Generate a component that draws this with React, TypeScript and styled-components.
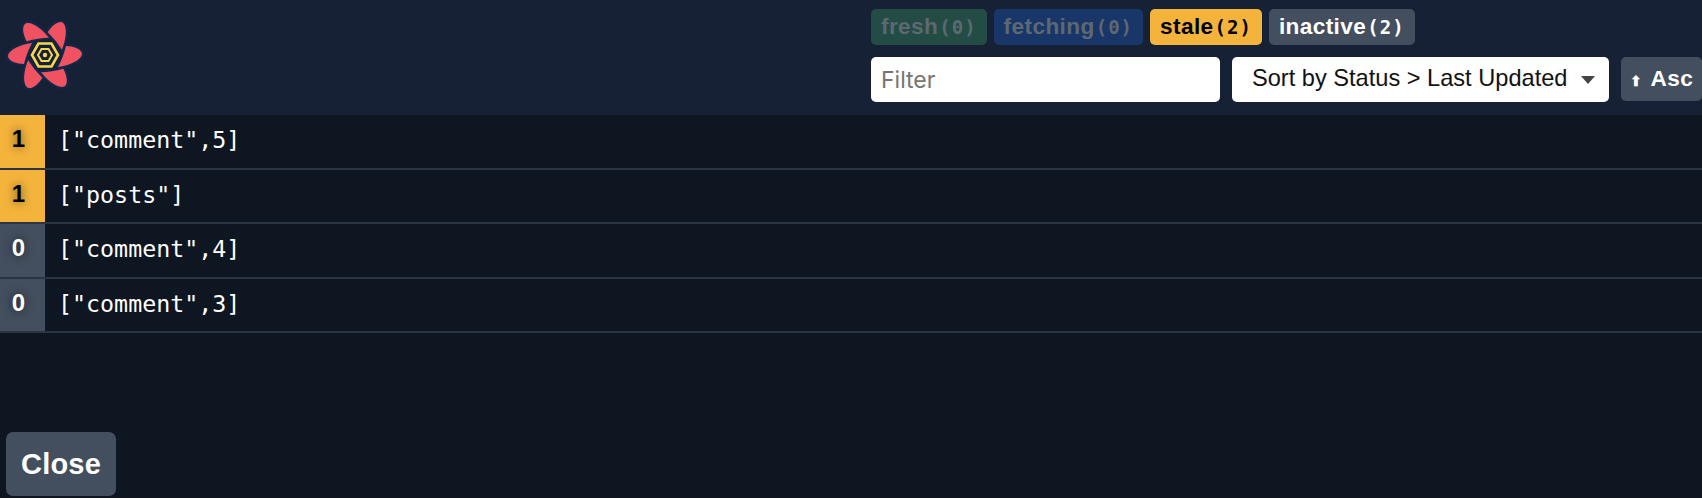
import React from "react";
import styled, { createGlobalStyle } from "styled-components";

type Status = "fresh" | "fetching" | "stale" | "inactive";

const statusColors: Record<Status, string> = {
  fresh: "#234d44",
  fetching: "#193669",
  stale: "#f4b43c",
  inactive: "#434e5e",
};

const badges: { status: Status; count: number }[] = [
  { status: "fresh", count: 0 },
  { status: "fetching", count: 0 },
  { status: "stale", count: 2 },
  { status: "inactive", count: 2 },
];

const queries: { observers: number; status: Status; hash: string }[] = [
  { observers: 1, status: "stale", hash: '["comment",5]' },
  { observers: 1, status: "stale", hash: '["posts"]' },
  { observers: 0, status: "inactive", hash: '["comment",4]' },
  { observers: 0, status: "inactive", hash: '["comment",3]' },
];

const Logo = () => (
  <svg width="90" height="90" viewBox="-45 -45 90 90">
    {[0, 60, 120, 180, 240, 300].map((angle) => (
      <path
        key={angle}
        transform={`rotate(${angle})`}
        d="M-13,-12 C-22,-11 -36,-6 -37,1 C-37,6 -28,9 -21,9 Q-18,-3 -13,-12 Z"
        fill="#f05261"
        stroke="#10294a"
        strokeWidth="4"
        paintOrder="stroke"
        strokeLinejoin="round"
      />
    ))}
    <g fill="#14213a" stroke="#f9d54a">
      <polygon points="-13,0 -6.5,-11.5 6.5,-11.5 13,0 6.5,11.5 -6.5,11.5" strokeWidth="2.6" />
      <polygon points="-7,0 -3.5,-6 3.5,-6 7,0 3.5,6 -3.5,6" strokeWidth="2" />
    </g>
    <circle r="2.2" fill="#f9d54a" />
  </svg>
);

const App: React.FC = () => {
  return (
    <>
      <GlobalStyle />
      <Panel>
        <Header>
          <LogoBox>
            <Logo />
          </LogoBox>
          <Controls>
            <BadgeRow>
              {badges.map((b) => (
                <Badge key={b.status} $status={b.status}>
                  {b.status}
                  <Count>({b.count})</Count>
                </Badge>
              ))}
            </BadgeRow>
            <FilterRow>
              <FilterInput type="text" placeholder="Filter" />
              <SortSelect>
                Sort by Status &gt; Last Updated
                <Caret />
              </SortSelect>
              <AscButton>
                <small>⬆</small> Asc
              </AscButton>
            </FilterRow>
          </Controls>
        </Header>
        <List>
          {queries.map((q, i) => (
            <Row key={i}>
              <Observers $status={q.status}>{q.observers}</Observers>
              <Hash>{q.hash}</Hash>
            </Row>
          ))}
        </List>
        <CloseButton>Close</CloseButton>
      </Panel>
    </>
  );
};

export default App;

const GlobalStyle = createGlobalStyle`
  html, body {
    margin: 0;
    padding: 0;
    background: #0d1621;
  }
`;

const Panel = styled.div`
  width: 1702px;
  height: 498px;
  position: relative;
  overflow: hidden;
  background: #0d1621;
  color: #fff;
  font-family: "Liberation Sans", Arial, sans-serif;
`;

const Header = styled.header`
  height: 115px;
  box-sizing: border-box;
  display: flex;
  justify-content: space-between;
  padding: 9px 0 0 0;
  background: #172136;
`;

const LogoBox = styled.div`
  width: 90px;
  height: 90px;
  margin-top: 1px;
`;

const Controls = styled.div`
  width: 831px;
  display: flex;
  flex-direction: column;
  gap: 12px;
`;

const BadgeRow = styled.div`
  display: flex;
  gap: 7px;
`;

const Badge = styled.span<{ $status: Status }>`
  height: 36px;
  box-sizing: border-box;
  display: flex;
  align-items: center;
  padding: 0 10px;
  border-radius: 5px;
  font-size: 22.6px;
  font-weight: 700;
  letter-spacing: 0.4px;
  background: ${(p) => statusColors[p.$status]};
  color: ${(p) =>
    p.$status === "stale"
      ? "#000"
      : p.$status === "inactive"
        ? "#fff"
        : "#5c6872"};
`;

const Count = styled.code`
  font-family: "DejaVu Sans Mono", monospace;
  font-size: 19px;
  font-weight: 700;
  letter-spacing: 1px;
  margin-left: 1px;
`;

const FilterRow = styled.div`
  display: flex;
  align-items: flex-start;
`;

const FilterInput = styled.input`
  width: 349px;
  height: 45px;
  box-sizing: border-box;
  border: 0;
  border-radius: 5px;
  padding: 0 10px;
  margin-right: 12px;
  font-family: "Inter", sans-serif;
  font-size: 23px;
  background: #fff;
  &::placeholder {
    color: #757575;
    opacity: 1;
  }
`;

const SortSelect = styled.div`
  width: 377px;
  height: 45px;
  box-sizing: border-box;
  display: flex;
  align-items: center;
  justify-content: space-between;
  padding: 0 14px 2px 20px;
  margin-right: 12px;
  border-radius: 5px;
  background: #fff;
  color: #111;
  font-size: 23.6px;
`;

const Caret = styled.span`
  width: 0;
  height: 0;
  margin-top: 3px;
  border-left: 7px solid transparent;
  border-right: 7px solid transparent;
  border-top: 8px solid #444;
`;

const AscButton = styled.button`
  width: 81px;
  height: 44px;
  flex-shrink: 0;
  border: 0;
  border-radius: 5px;
  padding: 0 0 0 9px;
  text-align: left;
  background: #434e5e;
  color: #fff;
  font-family: "Liberation Sans", sans-serif;
  font-weight: 700;
  font-size: 22.6px;
  letter-spacing: 0.5px;
  word-spacing: 2px;
  white-space: nowrap;
  small {
    font-size: 14px;
  }
`;

const List = styled.div`
  display: flex;
  flex-direction: column;
`;

const Row = styled.div`
  height: 54.6px;
  box-sizing: border-box;
  display: flex;
  border-bottom: 2px solid #2a3444;
`;

const Observers = styled.div<{ $status: Status }>`
  width: 45px;
  padding-right: 8px;
  box-sizing: border-box;
  display: flex;
  align-items: center;
  justify-content: center;
  padding-bottom: 4px;
  font-size: 24px;
  font-weight: 700;
  font-family: "Liberation Sans", sans-serif;
  text-shadow: 0 0 10px rgba(0, 0, 0, 0.6);
  background: ${(p) => statusColors[p.$status]};
  color: ${(p) => (p.$status === "stale" ? "#000" : "#fff")};
`;

const Hash = styled.code`
  display: flex;
  align-items: center;
  padding-left: 13px;
  padding-bottom: 3px;
  font-family: "DejaVu Sans Mono", monospace;
  font-size: 23.3px;
  color: #fff;
`;

const CloseButton = styled.button`
  position: absolute;
  left: 6px;
  top: 432px;
  width: 110px;
  height: 64px;
  border: 0;
  border-radius: 7px;
  background: #434e5e;
  color: #fff;
  font-family: "Liberation Sans", sans-serif;
  font-weight: 700;
  font-size: 29px;
  letter-spacing: 0.2px;
`;
